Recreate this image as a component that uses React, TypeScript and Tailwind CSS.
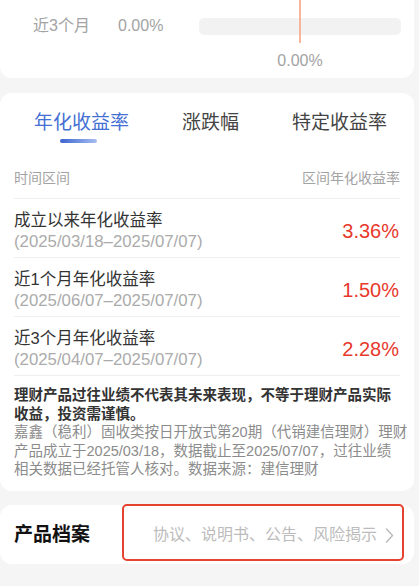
import React from 'react'

const font = { fontFamily: '"Liberation Sans", "Noto Sans CJK SC", sans-serif' }

const rows = [
  { title: '成立以来年化收益率', range: '(2025/03/18–2025/07/07)', value: '3.36%' },
  { title: '近1个月年化收益率', range: '(2025/06/07–2025/07/07)', value: '1.50%' },
  { title: '近3个月年化收益率', range: '(2025/04/07–2025/07/07)', value: '2.28%' },
]

const App = () => {
  return (
    <div className="w-[419px] min-h-[586px] bg-[#f5f5f5] pr-[5px]" style={font}>
      {/* top card, cut off */}
      <div className="relative h-[78px] bg-white rounded-b-[12px]">
        <div className="flex items-center h-[52px] pl-[33px] pr-[13px]">
          <span className="w-[85px] text-[16px] leading-[22px] text-[#a3a3a3]">近3个月</span>
          <span className="text-[16px] leading-[22px] text-[#a3a3a3]">0.00%</span>
          <div className="ml-auto w-[202px] h-[17px] rounded-[5px] bg-[#f2f2f2]" />
        </div>
        <div className="ml-[199px] w-[202px] text-center text-[16px] leading-[18px] text-[#a3a3a3]">0.00%</div>
        <div className="absolute left-[299px] top-0 h-[43px] w-[1.5px] bg-[#f7b59c]" />
      </div>

      <div className="mt-[15px] bg-white rounded-[12px] pb-[12px]">
        <div className="grid grid-cols-3 pl-[17px] pr-[10px] pt-[17px]">
          <div className="flex flex-col items-center">
            <span className="text-[19px] leading-[26px] text-[#4470d4]">年化收益率</span>
            <div className="mt-[3px] mr-[6px] w-[37px] h-[4px] rounded-full bg-gradient-to-r from-[#3d64cf] to-[#a9bdf0]" />
          </div>
          <div className="flex flex-col items-center">
            <span className="text-[19px] leading-[26px] text-[#444]">涨跌幅</span>
          </div>
          <div className="flex flex-col items-center">
            <span className="text-[19px] leading-[26px] text-[#444]">特定收益率</span>
          </div>
        </div>

        <div className="mx-[14px]">
          <div className="flex justify-between mt-[25px] pb-[10px] border-b border-[#eeeeee] text-[14px] leading-[20px] text-[#a3a3a3]">
            <span>时间区间</span>
            <span>区间年化收益率</span>
          </div>

          {rows.map((r) => (
            <div key={r.title} className="flex items-center justify-between pt-[10px] pb-[4px] border-b border-[#eeeeee]">
              <div>
                <div className="text-[16.5px] leading-[22px] text-[#333]">{r.title}</div>
                <div className="text-[16.8px] leading-[22px] text-[#ababab]">{r.range}</div>
              </div>
              <span className="text-[20px] leading-[26px] text-[#e8382c] mr-[1px]">{r.value}</span>
            </div>
          ))}

          <div className="mt-[10px] text-[14.5px] leading-[18.5px] whitespace-nowrap">
            <p className="font-bold text-[#333]">理财产品过往业绩不代表其未来表现，不等于理财产品实际</p>
            <p className="font-bold text-[#333]">收益，投资需谨慎。</p>
            <p className="text-[#8c8c8c]">嘉鑫（稳利）固收类按日开放式第20期（代销建信理财）理财</p>
            <p className="text-[#8c8c8c]">产品成立于2025/03/18，数据截止至2025/07/07，过往业绩</p>
            <p className="text-[#8c8c8c]">相关数据已经托管人核对。数据来源：建信理财</p>
          </div>
        </div>
      </div>

      <div className="relative mt-[14px] h-[59px] bg-white rounded-[12px] flex items-center pl-[14px] pr-[20px]">
        <span className="text-[19px] leading-[26px] font-bold text-[#111] mt-[2px]">产品档案</span>
        <span className="ml-auto text-[16px] leading-[22px] text-[#bcbcbc] mt-[2px]">协议、说明书、公告、风险揭示</span>
        <svg width="9" height="15" viewBox="0 0 9 15" className="ml-[8px] mt-[2px]" fill="none">
          <polyline points="1.5,1 7.5,7.5 1.5,14" stroke="#bcbcbc" strokeWidth="1.5" strokeLinecap="round" strokeLinejoin="round" />
        </svg>
        <div className="absolute left-[122px] top-[-1px] w-[282px] h-[57px] border-2 border-[#e5432f] rounded-[5px]" />
      </div>
    </div>
  )
}

export default App
